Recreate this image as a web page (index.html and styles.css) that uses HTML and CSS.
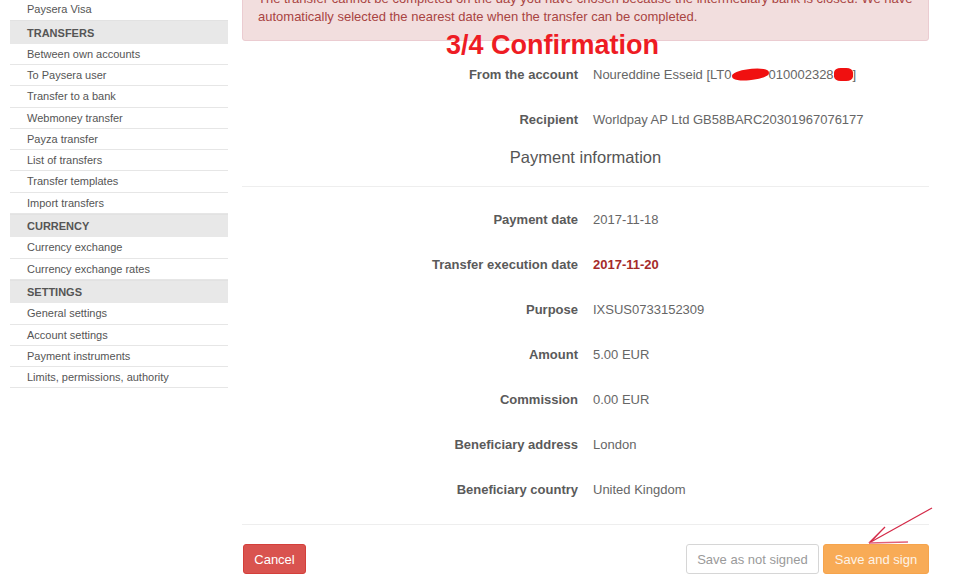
FILE: index.html
```html
<!DOCTYPE html>
<html lang="en">
<head>
<meta charset="utf-8">
<title>3/4 Confirmation</title>
<link rel="stylesheet" href="styles.css">
</head>
<body>
<div class="page">
  <aside class="sidebar">
    <ul class="nav">
      <li class="nav-item">Paysera Visa</li>
      <li class="nav-header">Transfers</li>
      <li class="nav-item">Between own accounts</li>
      <li class="nav-item">To Paysera user</li>
      <li class="nav-item">Transfer to a bank</li>
      <li class="nav-item">Webmoney transfer</li>
      <li class="nav-item">Payza transfer</li>
      <li class="nav-item">List of transfers</li>
      <li class="nav-item">Transfer templates</li>
      <li class="nav-item">Import transfers</li>
      <li class="nav-header">Currency</li>
      <li class="nav-item">Currency exchange</li>
      <li class="nav-item">Currency exchange rates</li>
      <li class="nav-header">Settings</li>
      <li class="nav-item">General settings</li>
      <li class="nav-item">Account settings</li>
      <li class="nav-item">Payment instruments</li>
      <li class="nav-item">Limits, permissions, authority</li>
    </ul>
  </aside>
  <main class="main">
    <div class="alert">The transfer cannot be completed on the day you have chosen because the intermediary bank is closed. We have automatically selected the nearest date when the transfer can be completed.</div>

    <dl class="details details-top">
      <div class="row"><dt>From the account</dt><dd>Noureddine Esseid [LT0<span class="scribble scribble-a"></span>010002328<span class="scribble scribble-b"></span>]</dd></div>
      <div class="row"><dt>Recipient</dt><dd>Worldpay AP Ltd GB58BARC20301967076177</dd></div>
    </dl>

    <h3 class="section-title">Payment information</h3>

    <dl class="details details-payment">
      <div class="row"><dt>Payment date</dt><dd>2017-11-18</dd></div>
      <div class="row"><dt>Transfer execution date</dt><dd class="highlight">2017-11-20</dd></div>
      <div class="row"><dt>Purpose</dt><dd>IXSUS0733152309</dd></div>
      <div class="row"><dt>Amount</dt><dd>5.00 EUR</dd></div>
      <div class="row"><dt>Commission</dt><dd>0.00 EUR</dd></div>
      <div class="row"><dt>Beneficiary address</dt><dd>London</dd></div>
      <div class="row"><dt>Beneficiary country</dt><dd>United Kingdom</dd></div>
    </dl>

    <div class="actions">
      <button class="btn btn-danger">Cancel</button>
      <div class="actions-right">
        <button class="btn btn-default">Save as not signed</button>
        <button class="btn btn-warning">Save and sign</button>
      </div>
    </div>
  </main>
</div>

<div class="annotation-title">3/4 Confirmation</div>
<svg class="annotation-arrow" width="80" height="50" viewBox="0 0 80 50">
  <path d="M2 38 L65 3" fill="none" stroke="#d42a48" stroke-width="1.2"/>
  <path d="M2 38 L18 22" fill="none" stroke="#d42a48" stroke-width="1.2"/>
  <path d="M4 37 L14 26" fill="none" stroke="#d42a48" stroke-width="1"/>
  <path d="M2 38 L41 37" fill="none" stroke="#e0607a" stroke-width="1.5"/>
</svg>
</body>
</html>
```

FILE: styles.css
```css
* {
  box-sizing: border-box;
}

html, body {
  margin: 0;
  padding: 0;
  background: #ffffff;
  overflow: hidden;
}

body {
  font-family: "Liberation Sans", Arial, sans-serif;
  color: #555555;
  width: 960px;
  height: 582px;
  position: relative;
}

.page {
  display: flex;
  align-items: flex-start;
  gap: 14px;
  margin-top: -25px;
  padding-left: 10px;
}

/* Sidebar */
.sidebar {
  width: 218px;
  flex: none;
  padding-top: 24px;
}

.nav {
  list-style: none;
  margin: 0;
  padding: 0;
}

.nav-item {
  height: 21.25px;
  display: flex;
  align-items: center;
  padding-left: 17px;
  font-size: 11px;
  color: #555555;
  border-bottom: 1px solid #e6e6e6;
}

.nav-item:first-child {
  border-bottom-color: transparent;
}

.nav-header {
  height: 23.5px;
  display: flex;
  align-items: center;
  padding-left: 17px;
  font-size: 11px;
  font-weight: bold;
  text-transform: uppercase;
  color: #555555;
  background: #e8e8e8;
  border-top: 1px solid #e2e2e2;
}

/* Main */
.main {
  width: 687px;
  flex: none;
}

.alert {
  background: #f2dede;
  border: 1px solid #ebccd1;
  border-radius: 3px;
  color: #a94442;
  font-size: 13px;
  line-height: 18px;
  padding: 14px 15px;
}

.details {
  margin: 0;
}

.details-top {
  margin-top: 11px;
}

.row {
  display: grid;
  grid-template-columns: 336px 1fr;
  column-gap: 15px;
  height: 45px;
  align-items: center;
  font-size: 13px;
}

.row dt {
  text-align: right;
  font-weight: bold;
  color: #5a5a5a;
}

.row dd {
  margin: 0;
  color: #666666;
}

.row dd.highlight {
  color: #a52a2a;
  font-weight: bold;
}

.scribble {
  display: inline-block;
  background: #f01010;
  border-radius: 45%;
  height: 11px;
  vertical-align: -1px;
}

.scribble-a {
  width: 37px;
  transform: rotate(-6deg);
}

.scribble-b {
  width: 19px;
  border-radius: 35%;
  height: 13px;
  vertical-align: -2px;
}

.section-title {
  margin: 5px 0 0;
  font-size: 16.5px;
  font-weight: normal;
  line-height: 20px;
  text-align: center;
  color: #555555;
  padding-bottom: 19px;
  border-bottom: 1px solid #eeeeee;
}

.details-payment {
  margin-top: 10px;
  padding-bottom: 12px;
  border-bottom: 1px solid #eeeeee;
}

.actions {
  display: flex;
  justify-content: space-between;
  padding-top: 19px;
}

.actions-right {
  display: flex;
  gap: 4px;
}

.btn {
  font-family: "Liberation Sans", Arial, sans-serif;
  font-size: 13px;
  height: 30px;
  padding: 0;
  text-align: center;
  white-space: nowrap;
  border-radius: 3px;
  border: 1px solid transparent;
  cursor: pointer;
}

.btn-danger {
  background: #d9534f;
  border-color: #d43f3a;
  color: #ffffff;
  margin-left: 1px;
  width: 63px;
}

.btn-default {
  background: #ffffff;
  border-color: #d6d6d6;
  color: #9a9a9a;
  width: 133px;
}

.btn-warning {
  background: #f8ab56;
  border-color: #f6a44c;
  color: #fdf3e8;
  width: 106px;
}

/* Annotations drawn over the screenshot */
.annotation-title {
  position: absolute;
  left: 446px;
  top: 32px;
  font-size: 27px;
  line-height: 27px;
  font-weight: bold;
  color: #ee1c24;
  white-space: nowrap;
}

.annotation-arrow {
  position: absolute;
  left: 867px;
  top: 505px;
}
```
